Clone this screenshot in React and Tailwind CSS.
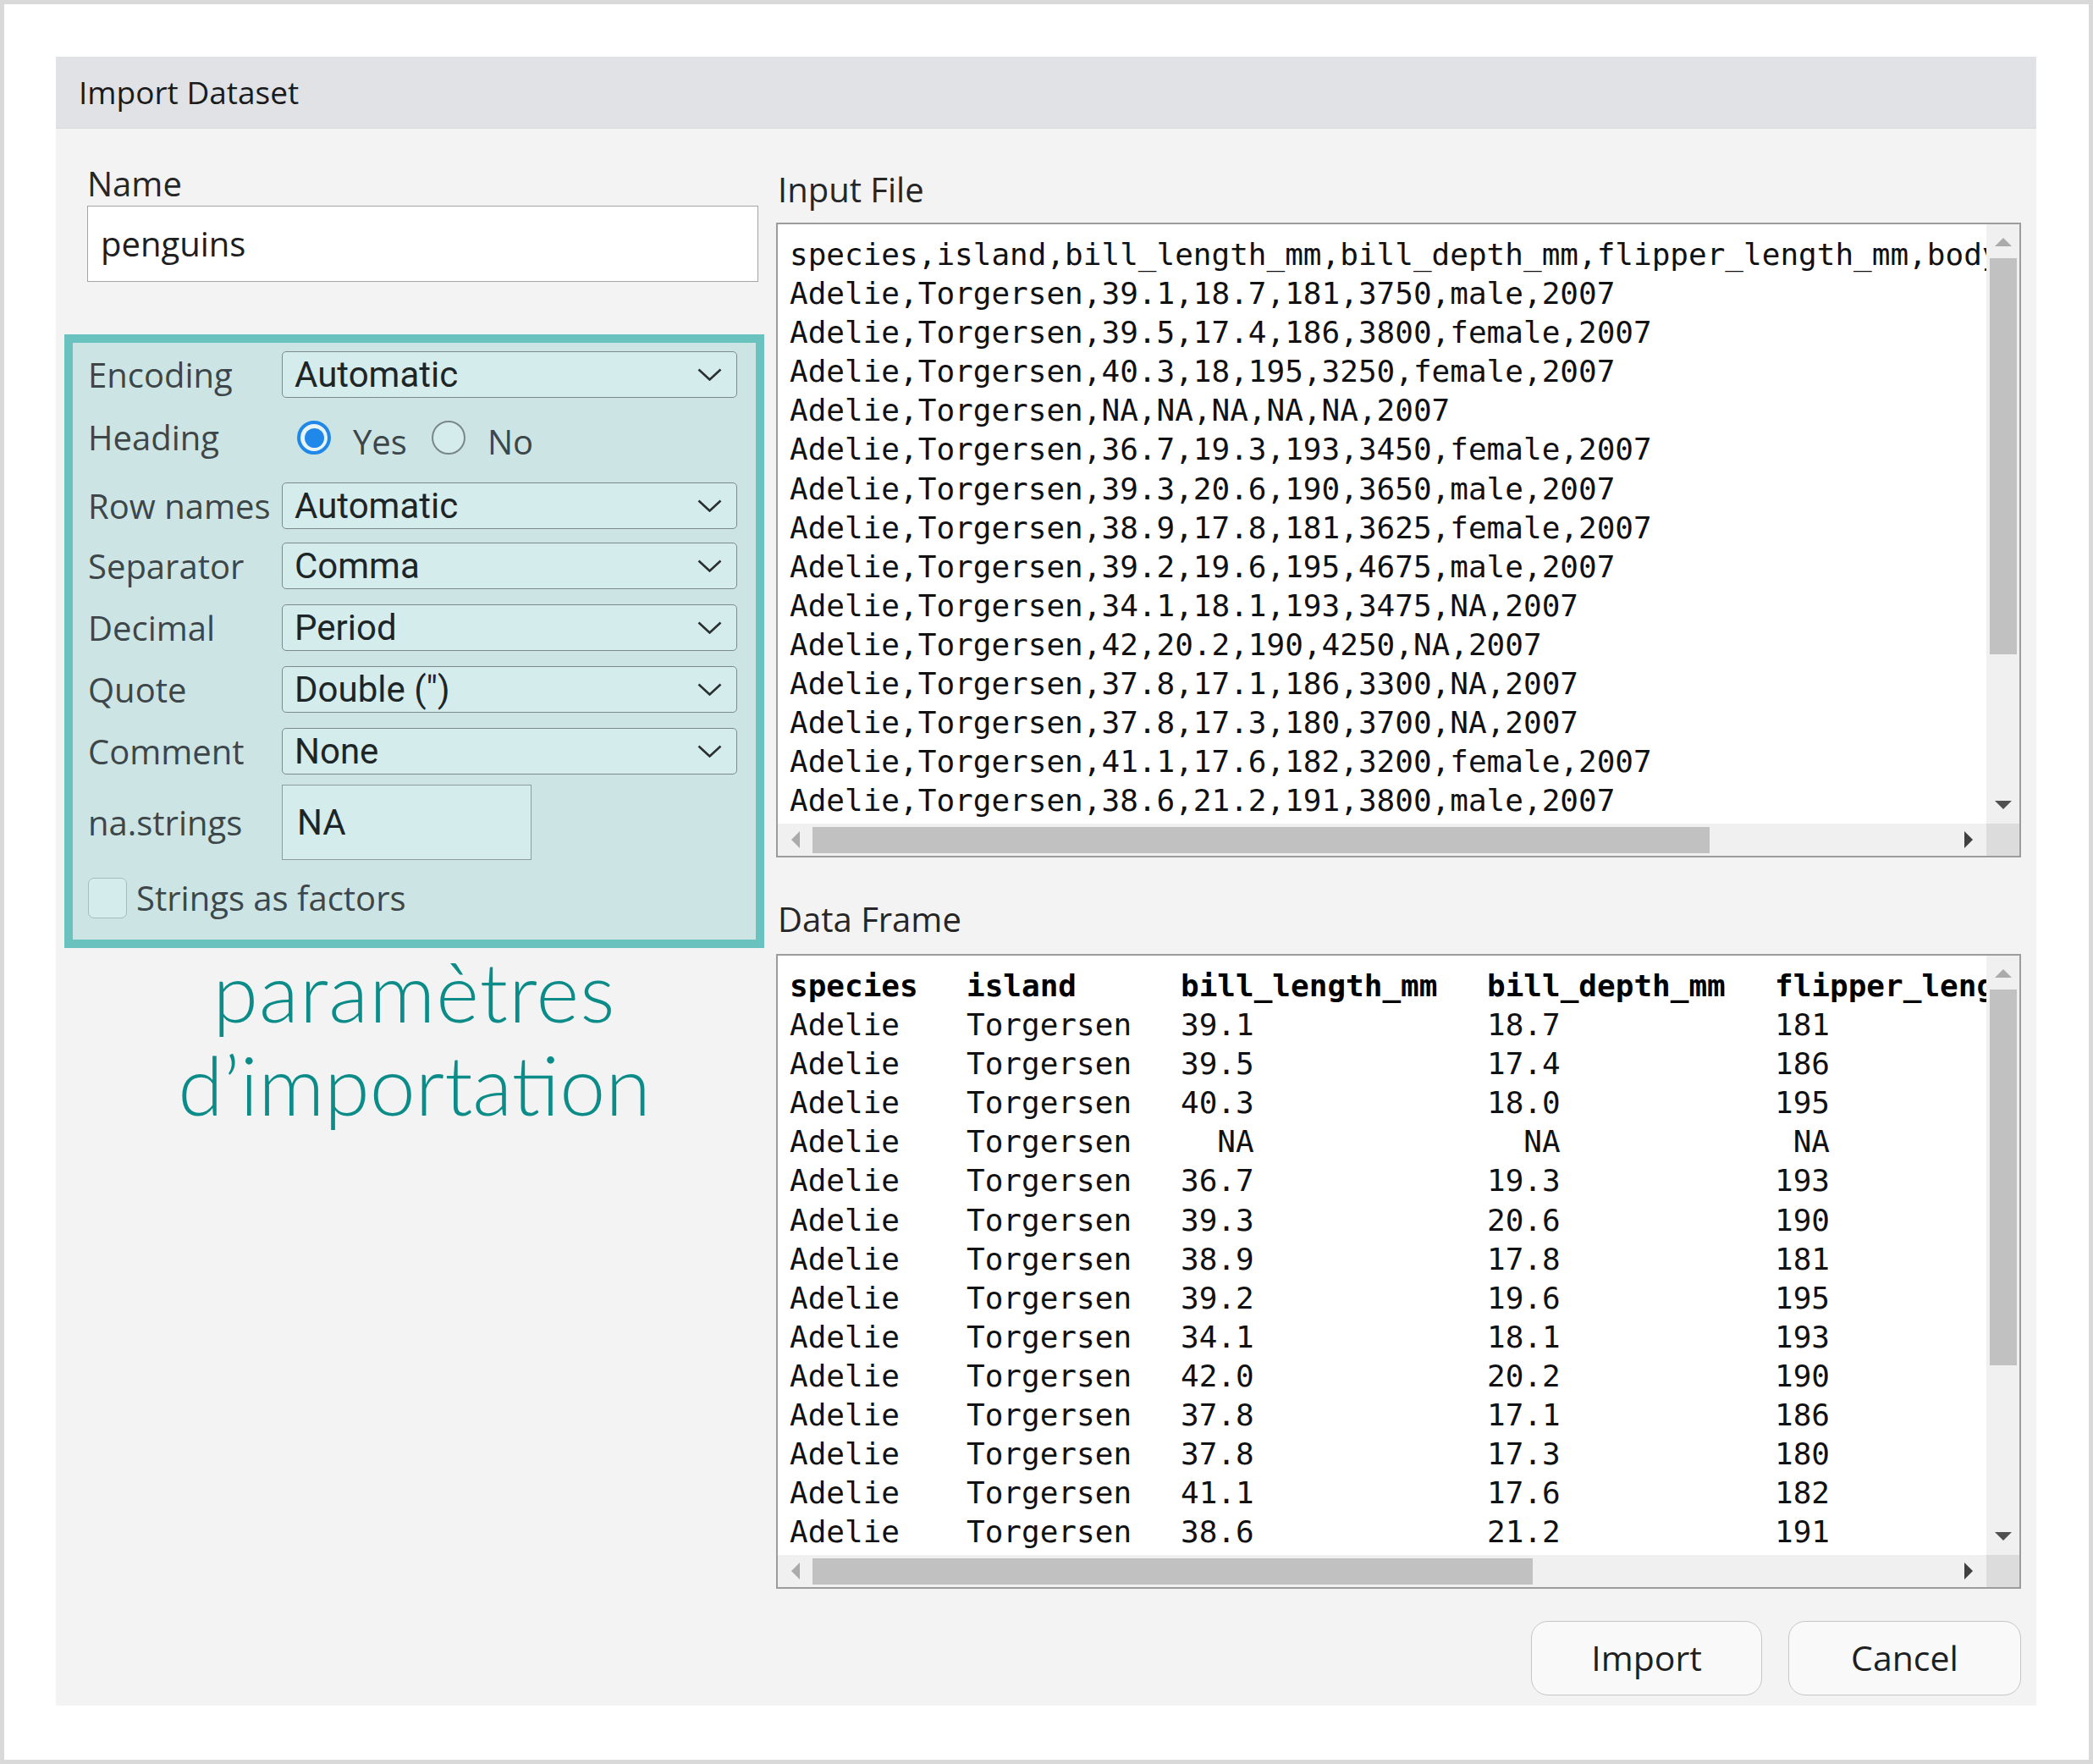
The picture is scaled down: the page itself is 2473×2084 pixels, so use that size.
import React from "react";

const inputLines = [
  "species,island,bill_length_mm,bill_depth_mm,flipper_length_mm,body_mass_g,sex,year",
  "Adelie,Torgersen,39.1,18.7,181,3750,male,2007",
  "Adelie,Torgersen,39.5,17.4,186,3800,female,2007",
  "Adelie,Torgersen,40.3,18,195,3250,female,2007",
  "Adelie,Torgersen,NA,NA,NA,NA,NA,2007",
  "Adelie,Torgersen,36.7,19.3,193,3450,female,2007",
  "Adelie,Torgersen,39.3,20.6,190,3650,male,2007",
  "Adelie,Torgersen,38.9,17.8,181,3625,female,2007",
  "Adelie,Torgersen,39.2,19.6,195,4675,male,2007",
  "Adelie,Torgersen,34.1,18.1,193,3475,NA,2007",
  "Adelie,Torgersen,42,20.2,190,4250,NA,2007",
  "Adelie,Torgersen,37.8,17.1,186,3300,NA,2007",
  "Adelie,Torgersen,37.8,17.3,180,3700,NA,2007",
  "Adelie,Torgersen,41.1,17.6,182,3200,female,2007",
  "Adelie,Torgersen,38.6,21.2,191,3800,male,2007",
];

const dfRows = [
  ["39.1", "18.7", "181"],
  ["39.5", "17.4", "186"],
  ["40.3", "18.0", "195"],
  ["  NA", "  NA", " NA"],
  ["36.7", "19.3", "193"],
  ["39.3", "20.6", "190"],
  ["38.9", "17.8", "181"],
  ["39.2", "19.6", "195"],
  ["34.1", "18.1", "193"],
  ["42.0", "20.2", "190"],
  ["37.8", "17.1", "186"],
  ["37.8", "17.3", "180"],
  ["41.1", "17.6", "182"],
  ["38.6", "21.2", "191"],
];

function Chevron() {
  return (
    <svg width="29" height="15" viewBox="0 0 29 15">
      <polyline points="1.5,1.5 14.5,13.5 27.5,1.5" fill="none" stroke="#2a2f30" strokeWidth="2.6" />
    </svg>
  );
}

function Select({ value }) {
  return (
    <div className="flex-1 h-[55px] flex items-center justify-between rounded-[5px] border-[1.5px] border-[#7d8a8a] bg-[#d4ecec] pl-[14px] pr-[17px]">
      <span className="font-['Roboto',sans-serif] text-[42px] leading-none text-[#1e2526]">{value}</span>
      <Chevron />
    </div>
  );
}

const labelCls = "w-[229px] shrink-0 text-[40px] leading-[48px] text-[#3d4648]";

function SelectRow({ label, value, mt }) {
  return (
    <div className={`flex items-center ${mt}`}>
      <div className={labelCls}>{label}</div>
      <Select value={value} />
    </div>
  );
}

function Tri({ dir, color }) {
  if (dir === "up")
    return (
      <svg width="20" height="10" viewBox="0 0 20 10"><polygon points="0,10 20,10 10,0" fill={color} /></svg>
    );
  if (dir === "down")
    return (
      <svg width="20" height="10" viewBox="0 0 20 10"><polygon points="0,0 20,0 10,10" fill={color} /></svg>
    );
  if (dir === "left")
    return (
      <svg width="10" height="20" viewBox="0 0 10 20"><polygon points="10,0 10,20 0,10" fill={color} /></svg>
    );
  return (
    <svg width="10" height="20" viewBox="0 0 10 20"><polygon points="0,0 0,20 10,10" fill={color} /></svg>
  );
}

function ScrollBox({ children, vThumb, hThumb }) {
  return (
    <div className="h-[750px] border-2 border-[#9c9c9c] bg-white flex flex-col">
      <div className="flex h-[708px]">
        <div className="flex-1 overflow-hidden pl-[14px] pt-[13px]">{children}</div>
        <div className="w-[39px] bg-[#f0f0f0] flex flex-col">
          <div className="h-[40px] flex items-center justify-center pt-[2px]">
            <Tri dir="up" color="#ababab" />
          </div>
          <div className="pl-[4px] pr-[3px]" style={{ height: vThumb }}>
            <div className="h-full bg-[#c1c1c1]" />
          </div>
          <div className="flex-1" />
          <div className="h-[44px] flex items-center justify-center">
            <Tri dir="down" color="#505050" />
          </div>
        </div>
      </div>
      <div className="h-[38px] flex">
        <div className="flex-1 flex bg-[#f0f0f0]">
          <div className="w-[41px] flex items-center justify-center">
            <Tri dir="left" color="#ababab" />
          </div>
          <div className="pt-[4px] pb-[3px]" style={{ width: hThumb }}>
            <div className="h-full bg-[#c1c1c1]" />
          </div>
          <div className="flex-1" />
          <div className="w-[42px] flex items-center justify-center">
            <Tri dir="right" color="#404040" />
          </div>
        </div>
        <div className="w-[39px] bg-[#dcdcdc]" />
      </div>
    </div>
  );
}

function Radio({ checked }) {
  if (checked)
    return (
      <div className="w-[40px] h-[40px] rounded-full border-[4px] border-[#1f88e8] bg-[#e9f4f6] flex items-center justify-center shrink-0">
        <div className="w-[23px] h-[23px] rounded-full bg-[#1f88e8]" />
      </div>
    );
  return <div className="w-[40px] h-[40px] rounded-full border-[2.5px] border-[#7b8787] bg-[#d4ecec] shrink-0" />;
}

export default function App() {
  return (
    <div className="w-[2473px] h-[2084px] bg-white border-[5px] border-[#d9d9d9] pt-[62px] pl-[61px] font-['Open_Sans',sans-serif]">
      <div className="w-[2340px] h-[1948px] bg-[#f2f3f2] flex flex-col">
        {/* Title bar */}
        <div className="h-[85px] shrink-0 bg-[#e1e2e5] border-b border-[#d8dadd] flex items-center pl-[27px] text-[37px] text-[#1b1b1b]">
          Import Dataset
        </div>

        {/* Body */}
        <div className="flex flex-1 pl-[10px] pr-[18px] gap-[14px]">
          {/* Left column */}
          <div className="w-[827px] shrink-0 flex flex-col">
            <div className="pl-[27px] pr-[7px]">
              <div className="mt-[41px] text-[40px] leading-[48px] text-[#262626]">Name</div>
              <div className="mt-[2px] h-[90px] bg-white border-[1.5px] border-[#a4a4a4] flex items-center pl-[15px] text-[40px] leading-[48px] text-[#1e1e1e]">
                penguins
              </div>
            </div>

            {/* Teal annotated box */}
            <div className="mt-[62px] h-[725px] border-[10px] border-[#69c2bd] bg-[#cce5e4] pl-[18px] pr-[22px] pt-[10px] flex flex-col">
              <SelectRow label="Encoding" value="Automatic" mt="" />
              <div className="flex items-center h-[100px] pb-[6px]">
                <div className={labelCls}>Heading</div>
                <div className="ml-[18px] flex items-center">
                  <Radio checked />
                  <span className="ml-[26px] text-[40px] leading-[48px] text-[#3d4648] pt-[10px]">Yes</span>
                  <div className="ml-[29px]"><Radio /></div>
                  <span className="ml-[26px] text-[40px] leading-[48px] text-[#3d4648] pt-[10px]">No</span>
                </div>
              </div>
              <SelectRow label="Row names" value="Automatic" mt="" />
              <SelectRow label="Separator" value="Comma" mt="mt-[16px]" />
              <SelectRow label="Decimal" value="Period" mt="mt-[18px]" />
              <SelectRow label="Quote" value={'Double (")'} mt="mt-[18px]" />
              <SelectRow label="Comment" value="None" mt="mt-[18px]" />
              <div className="flex items-center mt-[12px]">
                <div className={labelCls}>na.strings</div>
                <div className="w-[295px] h-[89px] border-[1.5px] border-[#8d9c9c] bg-[#d4ecec] flex items-center pl-[17px]">
                  <span className="font-['Roboto',sans-serif] text-[42px] leading-none text-[#1e2526]">NA</span>
                </div>
              </div>
              <div className="flex items-center mt-[21px]">
                <div className="w-[46px] h-[48px] rounded-[7px] border-[1.5px] border-[#a9bbbb] bg-[#d4ecec] shrink-0" />
                <span className="ml-[11px] text-[40px] leading-[48px] text-[#3d4648]">Strings as factors</span>
              </div>
            </div>

            {/* Caption */}
            <div className="-mt-[4px] text-center font-['Lato',sans-serif] font-light text-[97px] leading-[110px] text-[#0b8c89]">
              <div className="tracking-[1px]">paramètres</div>
              <div>d’importation</div>
            </div>
          </div>

          {/* Right column */}
          <div className="w-[1471px] shrink-0 flex flex-col">
            <div className="mt-[48px] pl-[2px] text-[40px] leading-[48px] text-[#262626]">Input File</div>
            <div className="mt-[15px]">
              <ScrollBox vThumb={468} hThumb={1060}>
                <div className="font-['DejaVu_Sans_Mono',monospace] text-[36px] leading-[46.1px] text-[#111] whitespace-pre">
                  {inputLines.map((l, i) => (
                    <div key={i}>{l}</div>
                  ))}
                </div>
              </ScrollBox>
            </div>

            <div className="mt-[49px] pl-[2px] text-[40px] leading-[48px] text-[#262626]">Data Frame</div>
            <div className="mt-[17px]">
              <ScrollBox vThumb={444} hThumb={851}>
                <div className="font-['DejaVu_Sans_Mono',monospace] text-[36px] leading-[46.1px] text-[#111] whitespace-pre">
                  <div className="flex font-bold text-black">
                    <div className="w-[209px] shrink-0">species</div>
                    <div className="w-[253px] shrink-0">island</div>
                    <div className="w-[362px] shrink-0">bill_length_mm</div>
                    <div className="w-[340px] shrink-0">bill_depth_mm</div>
                    <div className="shrink-0">flipper_length_mm</div>
                  </div>
                  {dfRows.map((r, i) => (
                    <div key={i} className="flex">
                      <div className="w-[209px] shrink-0">Adelie</div>
                      <div className="w-[253px] shrink-0">Torgersen</div>
                      <div className="w-[362px] shrink-0">{r[0]}</div>
                      <div className="w-[340px] shrink-0">{r[1]}</div>
                      <div className="shrink-0">{r[2]}</div>
                    </div>
                  ))}
                </div>
              </ScrollBox>
            </div>

            <div className="mt-[38px] flex justify-end gap-[31px]">
              <div className="w-[273px] h-[88px] rounded-[20px] border-[1.5px] border-[#c6c6c6] bg-[#f9f9f9] flex items-center justify-center text-[41px] text-[#1f1f1f]">
                Import
              </div>
              <div className="w-[275px] h-[88px] rounded-[20px] border-[1.5px] border-[#c6c6c6] bg-[#f9f9f9] flex items-center justify-center text-[41px] text-[#1f1f1f]">
                Cancel
              </div>
            </div>
          </div>
        </div>
      </div>
    </div>
  );
}
